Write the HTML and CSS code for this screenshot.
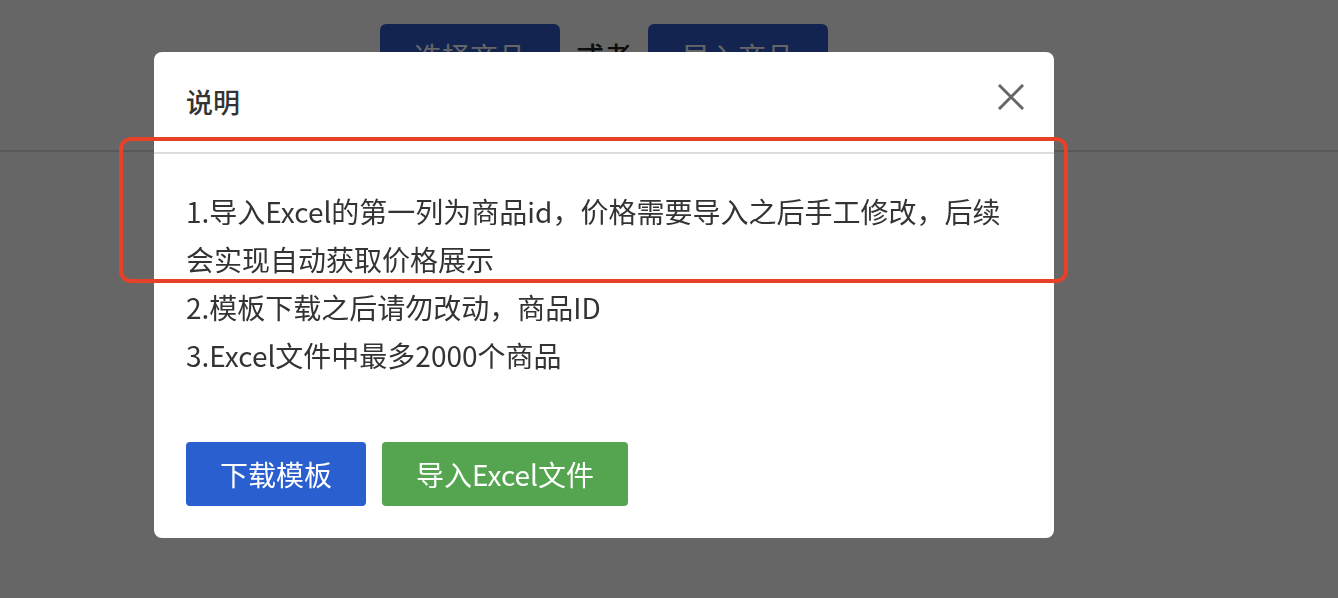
FILE: index.html
```html
<!DOCTYPE html>
<html lang="zh-CN">
<head>
<meta charset="utf-8">
<title>说明</title>
<link rel="stylesheet" href="styles.css">
</head>
<body>
<div class="page">
  <div class="toolbar">
    <button class="pbtn">选择商品</button>
    <span class="or">或者</span>
    <button class="pbtn">导入商品</button>
  </div>
</div>
<div class="overlay">
  <div class="modal">
    <div class="modal-header">
      <span class="modal-title">说明</span>
      <button class="close" aria-label="关闭">
        <svg width="26" height="26" viewBox="0 0 26 26"><path d="M2 2 L24 24 M24 2 L2 24" stroke="#666" stroke-width="3" stroke-linecap="square" fill="none"/></svg>
      </button>
    </div>
    <div class="modal-body">
      <p>1.导入Excel的第一列为商品id，价格需要导入之后手工修改，后续会实现自动获取价格展示</p>
      <p>2.模板下载之后请勿改动，商品ID</p>
      <p>3.Excel文件中最多2000个商品</p>
    </div>
    <div class="modal-footer">
      <button class="btn btn-blue">下载模板</button>
      <button class="btn btn-green">导入Excel文件</button>
    </div>
  </div>
  <div class="annot"></div>
</div>
</body>
</html>
```

FILE: styles.css
```css
* { box-sizing: border-box; }
html, body { margin: 0; padding: 0; }
body {
  width: 1338px;
  height: 598px;
  overflow: hidden;
  background: #fff;
  font-family: "Noto Sans CJK SC", "Noto Sans", sans-serif;
  color: #333;
}
.page {
  height: 598px;
}
.toolbar {
  height: 152px;
  border-bottom: 2px solid #ddd;
  display: flex;
  align-items: flex-start;
  padding: 24px 0 0 380px;
  gap: 16px;
}
.pbtn {
  width: 180px;
  height: 64px;
  border: none;
  border-radius: 6px;
  background: #305bc8;
  color: #fff;
  font: inherit;
  font-size: 28px;
}
.or {
  font-size: 28px;
  font-weight: 500;
  color: #222;
  line-height: 64px;
}
.overlay {
  position: fixed;
  inset: 0;
  background: rgba(0, 0, 0, 0.6);
  display: flex;
  align-items: flex-start;
  padding: 52px 0 0 154px;
}
.modal {
  width: 900px;
  background: #fff;
  border-radius: 8px;
}
.modal-header {
  height: 102px;
  border-bottom: 2px solid #dcdcdc;
  display: flex;
  align-items: center;
  justify-content: space-between;
  padding: 0 30px 2px 32px;
}
.modal-title {
  font-size: 27px;
  font-weight: 500;
  color: #333;
}
.close {
  background: none;
  border: none;
  padding: 0;
  width: 26px;
  height: 26px;
  display: flex;
  margin-top: -8px;
}
.modal-body {
  padding: 33px 32px 0;
  height: 260px;
}
.modal-body p {
  margin: 0;
  font-size: 28px;
  line-height: 48px;
  color: #333;
}
.modal-footer {
  display: flex;
  gap: 16px;
  padding: 28px 32px 32px;
}
.btn {
  height: 64px;
  border: none;
  border-radius: 4px;
  color: #fff;
  font: inherit;
  font-size: 28px;
  padding: 0 32px;
}
.btn-blue { background: #2a5fcf; width: 180px; }
.btn-green { background: #55a550; width: 246px; }
.annot {
  position: absolute;
  left: 119px;
  top: 137px;
  width: 949px;
  height: 146px;
  border: 4px solid #e8412a;
  border-radius: 12px;
}
```
